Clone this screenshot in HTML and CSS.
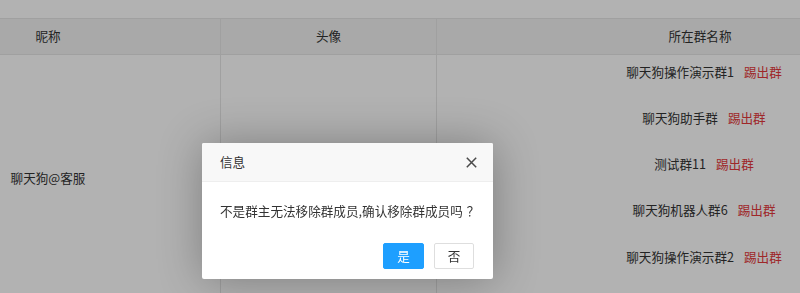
FILE: index.html
```html
<!DOCTYPE html>
<html lang="zh-CN">
<head>
<meta charset="utf-8">
<title>群成员</title>
<link rel="stylesheet" href="styles.css">
</head>
<body>
<div class="page">
  <div class="table">
    <div class="row head">
      <div class="cell c1">昵称</div>
      <div class="cell c2">头像</div>
      <div class="cell c3">所在群名称</div>
    </div>
    <div class="row body">
      <div class="cell c1">聊天狗@客服</div>
      <div class="cell c2"></div>
      <div class="cell c3 groups">
        <div class="group">聊天狗操作演示群1<span class="kick">踢出群</span></div>
        <div class="group">聊天狗助手群<span class="kick">踢出群</span></div>
        <div class="group">测试群11<span class="kick">踢出群</span></div>
        <div class="group">聊天狗机器人群6<span class="kick">踢出群</span></div>
        <div class="group">聊天狗操作演示群2<span class="kick">踢出群</span></div>
      </div>
    </div>
  </div>
</div>
<div class="shade"></div>
<div class="dialog">
  <div class="dialog-title">
    <span>信息</span>
    <svg class="close" width="11" height="11" viewBox="0 0 11 11"><path d="M0.8 0.8L10.2 10.2M10.2 0.8L0.8 10.2" stroke="#4a4a4a" stroke-width="1.5" fill="none"/></svg>
  </div>
  <div class="dialog-content">不是群主无法移除群成员,确认移除群成员吗<span class="qmark">？</span></div>
  <div class="dialog-btns">
    <span class="btn btn-primary">是</span>
    <span class="btn">否</span>
  </div>
</div>
</body>
</html>
```
FILE: styles.css
```css
html, body {
  margin: 0;
  padding: 0;
  background: #fff;
  overflow: hidden;
  width: 800px;
  height: 293px;
}
body {
  font-family: "Noto Sans CJK SC", "Microsoft YaHei", sans-serif;
  font-size: 12.6px;
  color: #333;
}
.page {
  padding-top: 18px;
  width: 800px;
  overflow: hidden;
}
.table {
  margin-left: -124px;
  width: 1096px;
  border-top: 1px solid #e6e6e6;
}
.row {
  display: grid;
  grid-template-columns: 345px 216px 535px;
}
.cell {
  border-right: 1px solid #e6e6e6;
  text-align: center;
  box-sizing: border-box;
}
.head {
  background: #f2f2f2;
  border-bottom: 1px solid #e6e6e6;
  height: 35px;
}
.head .cell {
  line-height: 34px;
}
.head .c3 {
  padding-right: 8px;
}
.body .c1 {
  display: flex;
  align-items: center;
  justify-content: center;
}
.groups {
  padding-top: 5.5px;
  padding-bottom: 34px;
  display: flex;
  flex-direction: column;
  gap: 25.25px;
}
.group {
  line-height: 21px;
  height: 21px;
}
.kick {
  color: #e4393c;
  margin-left: 10px;
}
.shade {
  position: fixed;
  inset: 0;
  background: rgba(0, 0, 0, 0.3);
}
.dialog {
  position: absolute;
  left: 202px;
  top: 143px;
  width: 291px;
  background: #fff;
  border-radius: 2px;
  box-shadow: 1px 1px 45px rgba(0, 0, 0, 0.3);
}
.dialog-title {
  height: 38px;
  line-height: 38px;
  border-bottom: 1px solid #eee;
  background: #f8f8f8;
  padding: 0 16px 0 18px;
  display: flex;
  justify-content: space-between;
  align-items: center;
  color: #333;
  border-radius: 2px 2px 0 0;
}
.close {
  display: block;
  margin-top: 1px;
}
.dialog-content {
  padding: 18px 0 18px 18px;
  line-height: 21px;
  white-space: nowrap;
}
.qmark {
  display: inline-block;
  margin-left: 4px;
}
.dialog-btns {
  display: flex;
  justify-content: flex-end;
  gap: 10px;
  padding: 4px 19px 10px;
}
.btn {
  display: inline-block;
  box-sizing: border-box;
  height: 26px;
  line-height: 24px;
  width: 40px;
  text-align: center;
  border: 1px solid #dedede;
  background: #fff;
  color: #333;
  border-radius: 2px;
}
.btn-primary {
  width: 41px;
  border-color: #1e9fff;
  background: #1e9fff;
  color: #fff;
}
```
